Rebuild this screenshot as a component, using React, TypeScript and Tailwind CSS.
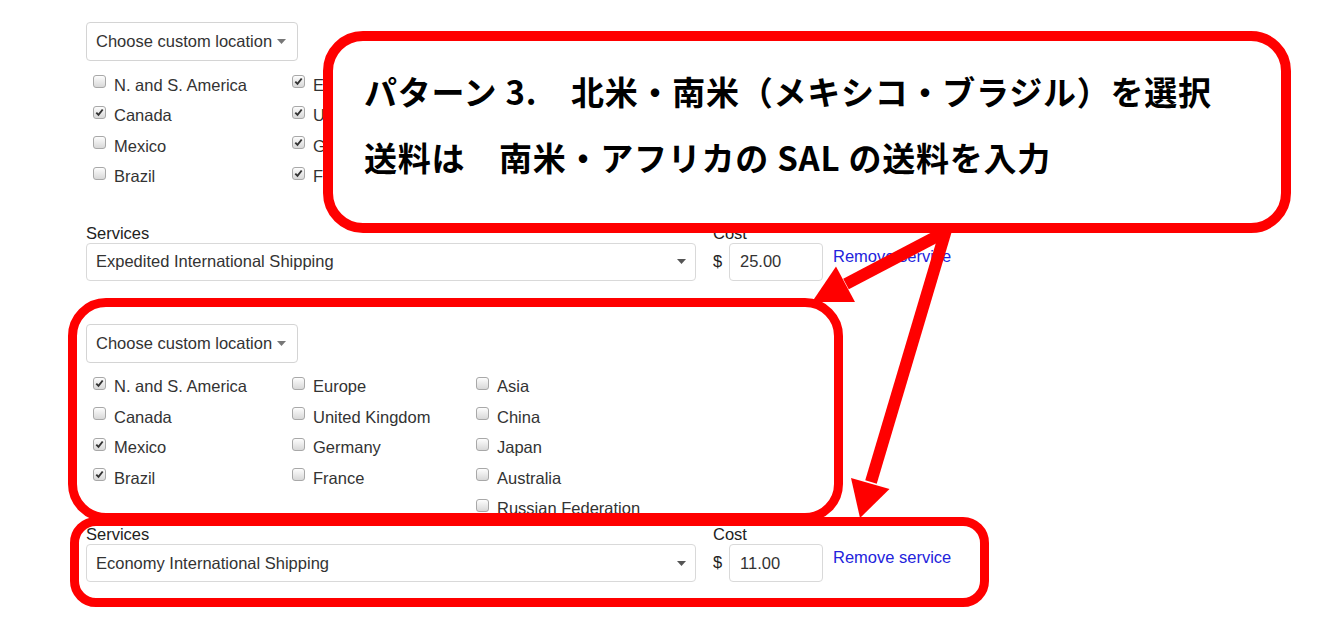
import React from "react";

type Item = { label: string; checked: boolean };

function Box({ checked }: { checked: boolean }) {
  return (
    <span className="ml-[7px] mr-[8px] mb-[7px] flex h-[13px] w-[13px] shrink-0 items-center justify-center rounded-[3px] border border-[#a8a8a8] bg-linear-to-b from-[#fdfdfd] to-[#d8d8d8]">
      {checked && (
        <svg width="9" height="9" viewBox="0 0 9 9">
          <path d="M1.3 4.6 L3.5 6.9 L7.7 1.5" stroke="#333" strokeWidth="1.9" fill="none" />
        </svg>
      )}
    </span>
  );
}

function Caret({ color = "#666" }: { color?: string }) {
  return (
    <svg width="9" height="5" viewBox="0 0 9 5" className="shrink-0">
      <path d="M0 0 L9 0 L4.5 5 Z" fill={color} />
    </svg>
  );
}

function Column({ items, width, hidden }: { items: Item[]; width: string; hidden?: boolean }) {
  return (
    <div className={`flex flex-col ${width} ${hidden ? "invisible" : ""}`}>
      {items.map((it) => (
        <div key={it.label} className="flex h-[30.5px] items-center">
          <Box checked={it.checked} />
          <span className="whitespace-nowrap leading-[19px]">{it.label}</span>
        </div>
      ))}
    </div>
  );
}

function Block({
  cols,
  service,
  cost,
  hideThird,
}: {
  cols: Item[][];
  service: string;
  cost: string;
  hideThird?: boolean;
}) {
  return (
    <div className="flex flex-col">
      <div className="flex h-[39px] w-[212px] items-center gap-[5px] rounded-[4px] border border-[#d4d4d4] pl-[9px] text-[#333]">
        <span className="whitespace-nowrap">Choose custom location</span>
        <Caret color="#777" />
      </div>
      <div className="mt-[9px] flex text-[#333]">
        <Column items={cols[0]} width="w-[199px]" />
        <Column items={cols[1]} width="w-[184px]" />
        <Column items={cols[2]} width="w-[200px]" hidden={hideThird} />
      </div>
      <div className="flex items-start gap-[17px]">
        <div className="flex w-[610px] flex-col">
          <div className="h-[20px] leading-[20px] text-[#222]">Services</div>
          <div className="flex h-[38px] items-center justify-between rounded-[4px] border border-[#d9d9d9] pl-[9px] pr-[9px] text-[#333]">
            <span>{service}</span>
            <Caret color="#555" />
          </div>
        </div>
        <div className="flex flex-col">
          <div className="h-[20px] leading-[20px] text-[#222]">Cost</div>
          <div className="flex items-start">
            <span className="mt-[8px] w-[9px] leading-[20px] text-[#222]">$</span>
            <div className="ml-[7px] flex h-[38px] w-[94px] items-center rounded-[4px] border border-[#d9d9d9] pl-[10px] text-[#333]">
              {cost}
            </div>
            <a className="ml-[10px] mt-[3px] whitespace-nowrap leading-[20px] text-[#2323dc]">Remove service</a>
          </div>
        </div>
      </div>
    </div>
  );
}

const block1: Item[][] = [
  [
    { label: "N. and S. America", checked: false },
    { label: "Canada", checked: true },
    { label: "Mexico", checked: false },
    { label: "Brazil", checked: false },
  ],
  [
    { label: "Europe", checked: true },
    { label: "United Kingdom", checked: true },
    { label: "Germany", checked: true },
    { label: "France", checked: true },
  ],
  [
    { label: "Asia", checked: true },
    { label: "China", checked: true },
    { label: "Japan", checked: true },
    { label: "Australia", checked: true },
    { label: "Russian Federation", checked: true },
  ],
];

const block2: Item[][] = [
  [
    { label: "N. and S. America", checked: true },
    { label: "Canada", checked: false },
    { label: "Mexico", checked: true },
    { label: "Brazil", checked: true },
  ],
  [
    { label: "Europe", checked: false },
    { label: "United Kingdom", checked: false },
    { label: "Germany", checked: false },
    { label: "France", checked: false },
  ],
  [
    { label: "Asia", checked: false },
    { label: "China", checked: false },
    { label: "Japan", checked: false },
    { label: "Australia", checked: false },
    { label: "Russian Federation", checked: false },
  ],
];

export default function App() {
  return (
    <div className="relative h-[619px] w-[1319px] overflow-hidden bg-white font-['Liberation_Sans',Arial,sans-serif] text-[16.5px]">
      <div className="flex flex-col pl-[86px] pt-[22px]">
        <Block cols={block1} service="Expedited International Shipping" cost="25.00" hideThird />
        <div className="mt-[43px]">
          <Block cols={block2} service="Economy International Shipping" cost="11.00" />
        </div>
      </div>

      {/* Callout */}
      <div className="absolute left-[323px] top-[31px] h-[202px] w-[968px] rounded-[40px] border-[10px] border-[#ff0000] bg-white pl-[31px] pt-[17px] font-['Noto_Sans_CJK_JP',sans-serif] text-[33px] font-bold leading-[66px] tracking-[0.75px] text-black">
        <div className="whitespace-pre">パターン 3.　北米・南米（メキシコ・ブラジル）を選択</div>
        <div className="whitespace-pre">送料は　南米・アフリカの SAL の送料を入力</div>
      </div>

      {/* Highlight boxes */}
      <div className="pointer-events-none absolute left-[68px] top-[298px] h-[224px] w-[775px] rounded-[38px] border-[9px] border-[#ff0000]" />
      <div className="pointer-events-none absolute left-[70px] top-[517px] h-[90px] w-[919px] rounded-[26px] border-[9px] border-[#ff0000]" />

      {/* Arrows */}
      <svg className="pointer-events-none absolute left-0 top-0" width="1319" height="619" viewBox="0 0 1319 619">
        <line x1="947" y1="231" x2="846" y2="284" stroke="#ff0000" strokeWidth="12" />
        <polygon points="812,302 836,266.6 855,302" fill="#ff0000" />
        <line x1="946" y1="230" x2="871" y2="482" stroke="#ff0000" strokeWidth="12" />
        <polygon points="860,518 851,478 889.5,489" fill="#ff0000" />
      </svg>
    </div>
  );
}
